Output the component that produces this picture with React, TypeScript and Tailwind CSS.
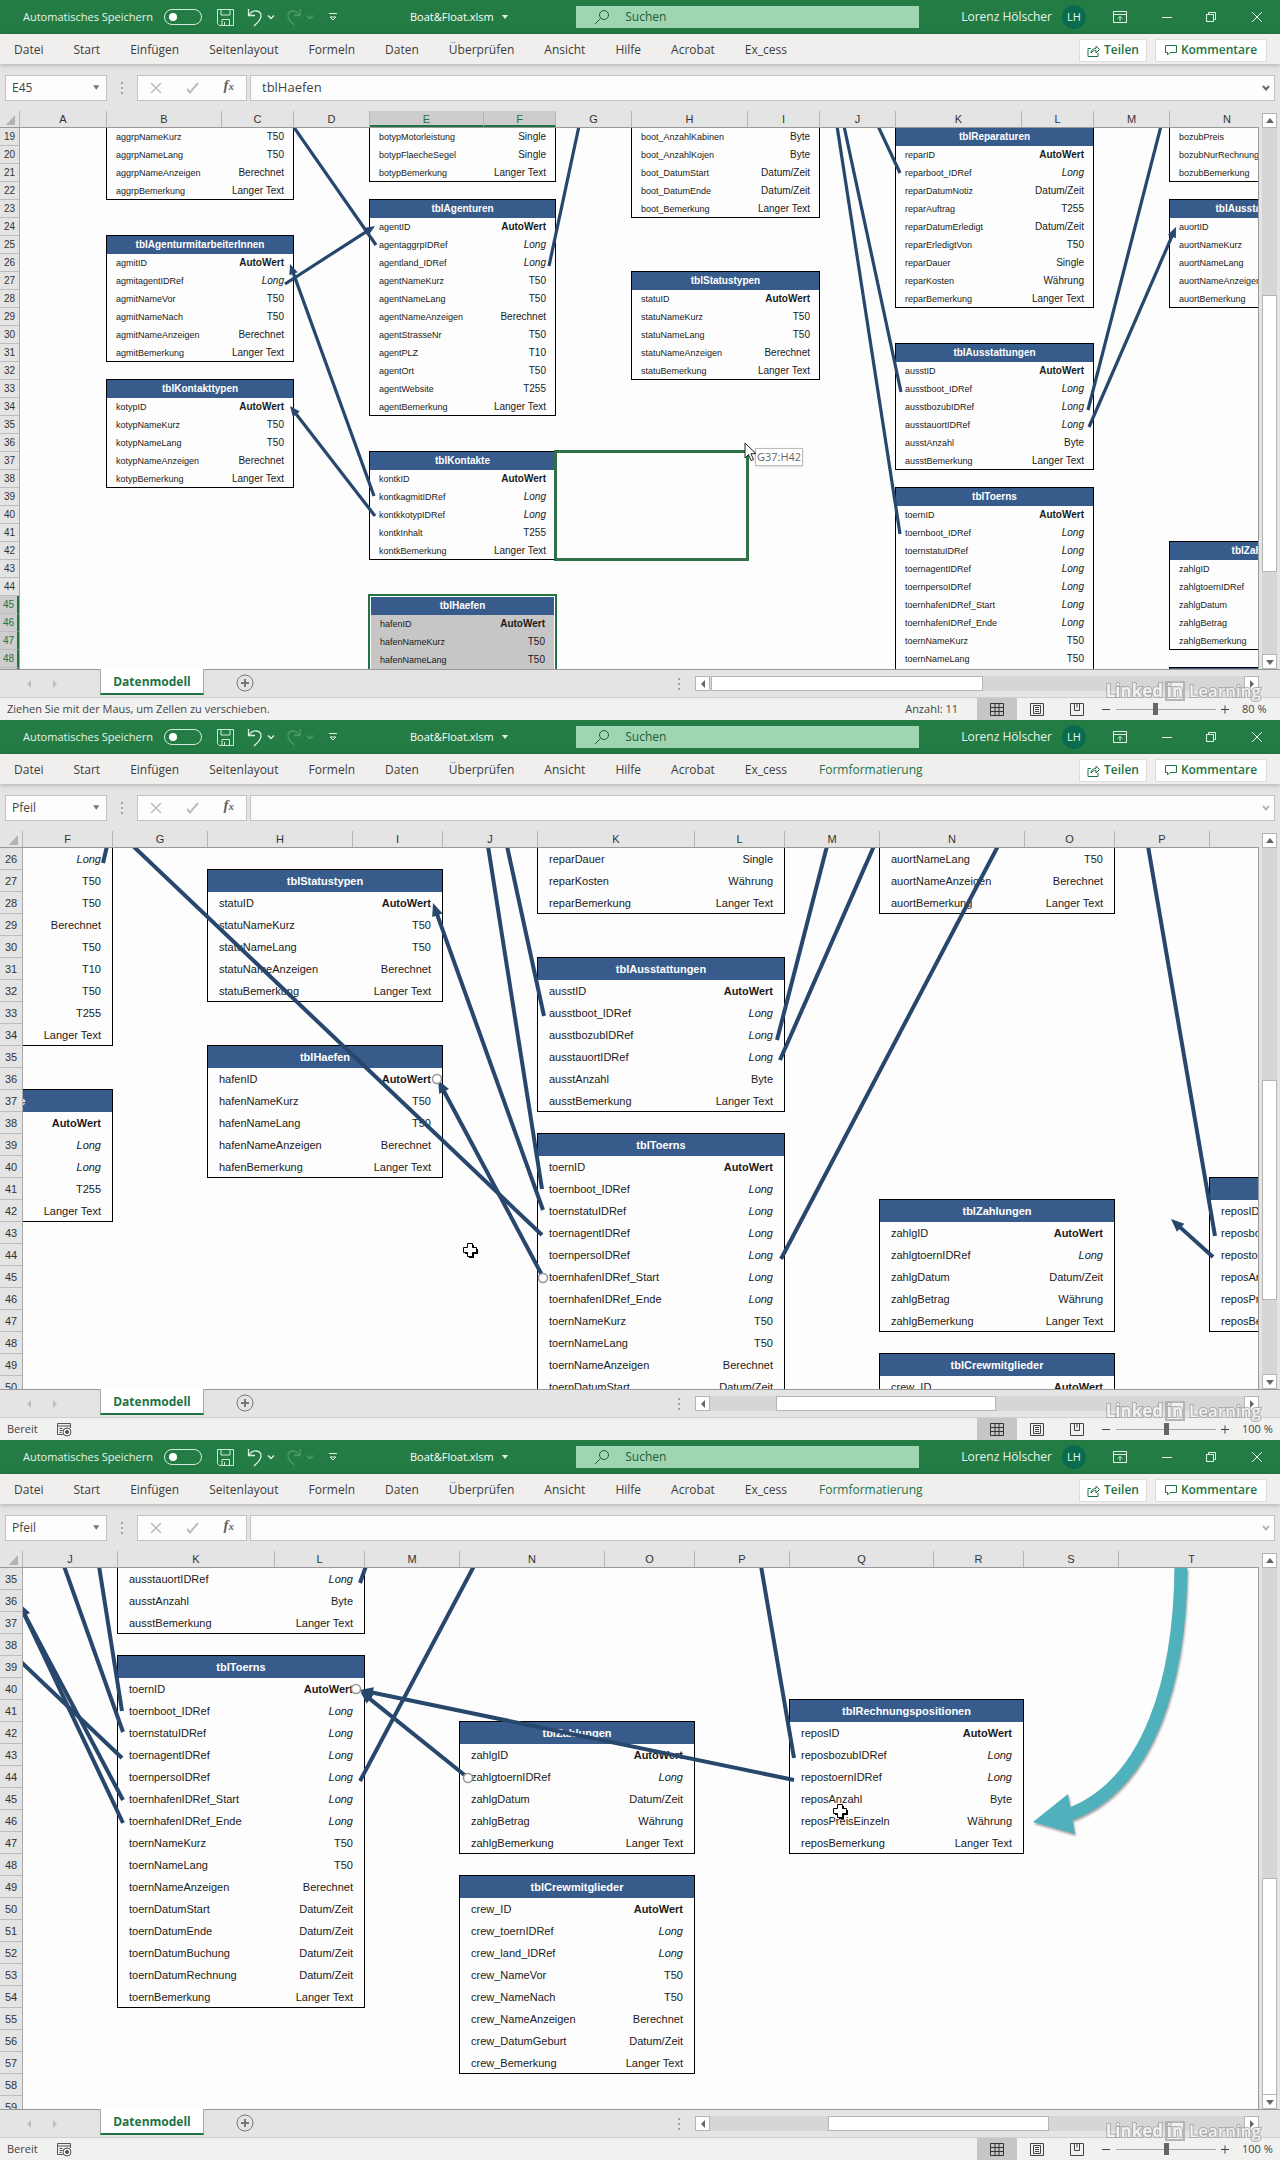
import type { ReactNode } from "react";
import clsx from "clsx";

type Field = [name: string, type: string];
type Point = [x: number, y: number];

interface Entity {
	col: string;
	fields: Field[];
	row: number;
	selected?: boolean;
	title?: string;
}

interface Connector {
	arrow?: boolean;
	from: Point;
	to: Point;
}

interface Column {
	letter: string;
	width: number;
}

interface Workbook {
	columns: Column[];
	connectors: Connector[];
	contextTab?: string;
	entities: Entity[];
	firstRow: number;
	formula: string;
	handles: Point[];
	hiddenWidth: number;
	hScroll: { start: string; thumb: string };
	id: string;
	nameBox: string;
	overlay?: ReactNode;
	rowCount: number;
	rowHeight: number;
	selectedCols?: string;
	selectedFromRow?: number;
	status: string;
	total?: string;
	vScroll: { start: string; thumb: string };
	zoom: number;
	zoomPosition: number;
}

const AUTO = "AutoWert";
const LONG = "Long";
const DATE = "Datum/Zeit";
const TEXT = "Langer Text";
const CALC = "Berechnet";

const ribbonTabs = [
	"Datei",
	"Start",
	"Einfügen",
	"Seitenlayout",
	"Formeln",
	"Daten",
	"Überprüfen",
	"Ansicht",
	"Hilfe",
	"Acrobat",
	"Ex_cess",
];

const haefenFields: Field[] = [
	["hafenID", AUTO],
	["hafenNameKurz", "T50"],
	["hafenNameLang", "T50"],
	["hafenNameAnzeigen", CALC],
	["hafenBemerkung", TEXT],
];

const model: Entity[] = [
	{
		col: "B",
		row: 19,
		fields: [
			["aggrpNameKurz", "T50"],
			["aggrpNameLang", "T50"],
			["aggrpNameAnzeigen", CALC],
			["aggrpBemerkung", TEXT],
		],
	},
	{
		title: "tblAgenturmitarbeiterInnen",
		col: "B",
		row: 25,
		fields: [
			["agmitID", AUTO],
			["agmitagentIDRef", LONG],
			["agmitNameVor", "T50"],
			["agmitNameNach", "T50"],
			["agmitNameAnzeigen", CALC],
			["agmitBemerkung", TEXT],
		],
	},
	{
		title: "tblKontakttypen",
		col: "B",
		row: 33,
		fields: [
			["kotypID", AUTO],
			["kotypNameKurz", "T50"],
			["kotypNameLang", "T50"],
			["kotypNameAnzeigen", CALC],
			["kotypBemerkung", TEXT],
		],
	},
	{
		col: "E",
		row: 19,
		fields: [
			["botypMotorleistung", "Single"],
			["botypFlaecheSegel", "Single"],
			["botypBemerkung", TEXT],
		],
	},
	{
		title: "tblAgenturen",
		col: "E",
		row: 23,
		fields: [
			["agentID", AUTO],
			["agentaggrpIDRef", LONG],
			["agentland_IDRef", LONG],
			["agentNameKurz", "T50"],
			["agentNameLang", "T50"],
			["agentNameAnzeigen", CALC],
			["agentStrasseNr", "T50"],
			["agentPLZ", "T10"],
			["agentOrt", "T50"],
			["agentWebsite", "T255"],
			["agentBemerkung", TEXT],
		],
	},
	{
		title: "tblKontakte",
		col: "E",
		row: 37,
		fields: [
			["kontkID", AUTO],
			["kontkagmitIDRef", LONG],
			["kontkkotypIDRef", LONG],
			["kontkInhalt", "T255"],
			["kontkBemerkung", TEXT],
		],
	},
	{
		col: "H",
		row: 19,
		fields: [
			["boot_AnzahlKabinen", "Byte"],
			["boot_AnzahlKojen", "Byte"],
			["boot_DatumStart", DATE],
			["boot_DatumEnde", DATE],
			["boot_Bemerkung", TEXT],
		],
	},
	{
		title: "tblStatustypen",
		col: "H",
		row: 27,
		fields: [
			["statuID", AUTO],
			["statuNameKurz", "T50"],
			["statuNameLang", "T50"],
			["statuNameAnzeigen", CALC],
			["statuBemerkung", TEXT],
		],
	},
	{
		title: "tblReparaturen",
		col: "K",
		row: 19,
		fields: [
			["reparID", AUTO],
			["reparboot_IDRef", LONG],
			["reparDatumNotiz", DATE],
			["reparAuftrag", "T255"],
			["reparDatumErledigt", DATE],
			["reparErledigtVon", "T50"],
			["reparDauer", "Single"],
			["reparKosten", "Währung"],
			["reparBemerkung", TEXT],
		],
	},
	{
		title: "tblAusstattungen",
		col: "K",
		row: 31,
		fields: [
			["ausstID", AUTO],
			["ausstboot_IDRef", LONG],
			["ausstbozubIDRef", LONG],
			["ausstauortIDRef", LONG],
			["ausstAnzahl", "Byte"],
			["ausstBemerkung", TEXT],
		],
	},
	{
		title: "tblToerns",
		col: "K",
		row: 39,
		fields: [
			["toernID", AUTO],
			["toernboot_IDRef", LONG],
			["toernstatuIDRef", LONG],
			["toernagentIDRef", LONG],
			["toernpersoIDRef", LONG],
			["toernhafenIDRef_Start", LONG],
			["toernhafenIDRef_Ende", LONG],
			["toernNameKurz", "T50"],
			["toernNameLang", "T50"],
			["toernNameAnzeigen", CALC],
			["toernDatumStart", DATE],
			["toernDatumEnde", DATE],
			["toernDatumBuchung", DATE],
			["toernDatumRechnung", DATE],
			["toernBemerkung", TEXT],
		],
	},
	{
		col: "N",
		row: 19,
		fields: [
			["bozubPreis", ""],
			["bozubNurRechnung", ""],
			["bozubBemerkung", ""],
		],
	},
	{
		title: "tblAusstattungsorte",
		col: "N",
		row: 23,
		fields: [
			["auortID", AUTO],
			["auortNameKurz", "T50"],
			["auortNameLang", "T50"],
			["auortNameAnzeigen", CALC],
			["auortBemerkung", TEXT],
		],
	},
	{
		title: "tblZahlungen",
		col: "N",
		row: 42,
		fields: [
			["zahlgID", AUTO],
			["zahlgtoernIDRef", LONG],
			["zahlgDatum", DATE],
			["zahlgBetrag", "Währung"],
			["zahlgBemerkung", TEXT],
		],
	},
	{
		title: "tblCrewmitglieder",
		col: "N",
		row: 49,
		fields: [
			["crew_ID", AUTO],
			["crew_toernIDRef", LONG],
			["crew_land_IDRef", LONG],
			["crew_NameVor", "T50"],
			["crew_NameNach", "T50"],
			["crew_NameAnzeigen", CALC],
			["crew_DatumGeburt", DATE],
			["crew_Bemerkung", TEXT],
		],
	},
	{
		title: "tblRechnungspositionen",
		col: "Q",
		row: 41,
		fields: [
			["reposID", AUTO],
			["reposbozubIDRef", LONG],
			["repostoernIDRef", LONG],
			["reposAnzahl", "Byte"],
			["reposPreisEinzeln", "Währung"],
			["reposBemerkung", TEXT],
		],
	},
];

function columnsFrom(first: string, widths: number[]): Column[] {
	return widths.map((width, i) => ({
		letter: String.fromCharCode(first.charCodeAt(0) + i),
		width,
	}));
}

function ArrowCursor() {
	return (
		<svg
			className="absolute left-[724px] top-[314px]"
			width="14"
			height="20"
			viewBox="0 0 14 20"
		>
			<path
				d="M1 1v15l3.5-3.4 2.6 5.9 2.4-1-2.6-5.8H12z"
				fill="#fff"
				stroke="#222"
			/>
		</svg>
	);
}

function CrossCursor({ className }: { className: string }) {
	return (
		<svg
			className={clsx("absolute", className)}
			width="17"
			height="17"
			viewBox="0 0 17 17"
		>
			<path d="M7 3h5v4h4v5h-4v4H7v-4H3V7h4z" fill="#000" />
			<path
				d="M5.5 1.5h5v4h4v5h-4v4h-5v-4h-4v-5h4z"
				fill="#fff"
				stroke="#000"
			/>
		</svg>
	);
}

const workbooks: Workbook[] = [
	{
		id: "move",
		nameBox: "E45",
		formula: "tblHaefen",
		zoom: 80,
		zoomPosition: 39,
		firstRow: 19,
		rowCount: 31,
		rowHeight: 18,
		hiddenWidth: 0,
		columns: columnsFrom(
			"A",
			[87, 115, 72, 76, 114, 72, 76, 116, 72, 76, 126, 72, 76, 115, 72],
		),
		selectedCols: "EF",
		selectedFromRow: 45,
		status: "Ziehen Sie mit der Maus, um Zellen zu verschieben.",
		total: "Anzahl: 11",
		vScroll: { start: "h-[167px]", thumb: "h-[277px]" },
		hScroll: { start: "w-px", thumb: "w-[272px]" },
		entities: [
			...model,
			{
				title: "tblHaefen",
				col: "E",
				row: 45,
				fields: haefenFields,
				selected: true,
			},
		],
		handles: [],
		connectors: [
			{ from: [293, 126], to: [376, 245] },
			{ from: [285, 284], to: [375, 226], arrow: true },
			{ from: [579, 126], to: [549, 266] },
			{ from: [374, 496], to: [290, 264], arrow: true },
			{ from: [375, 516], to: [290, 406], arrow: true },
			{ from: [837, 126], to: [900, 534] },
			{ from: [844, 126], to: [901, 392] },
			{ from: [878, 126], to: [900, 173] },
			{ from: [1161, 126], to: [1088, 410] },
			{ from: [1089, 427], to: [1176, 227], arrow: true },
		],
		overlay: (
			<>
				<span className="absolute left-[735px] top-[320px] border border-[#bdbdbd] bg-white px-px font-['Open_Sans',sans-serif] text-[11px] leading-4 text-[#666] shadow">
					G37:H42
				</span>
				<ArrowCursor />
			</>
		),
	},
	{
		id: "harbours",
		nameBox: "Pfeil",
		formula: "",
		contextTab: "Formformatierung",
		zoom: 100,
		zoomPosition: 50,
		firstRow: 26,
		rowCount: 25,
		rowHeight: 22,
		hiddenWidth: 145,
		columns: columnsFrom(
			"E",
			[145, 90, 95, 145, 90, 95, 157, 90, 95, 145, 90, 95, 144, 90],
		),
		status: "Bereit",
		vScroll: { start: "h-[232px]", thumb: "h-[220px]" },
		hScroll: { start: "w-[66px]", thumb: "w-[220px]" },
		entities: [
			...model,
			{ title: "tblHaefen", col: "H", row: 35, fields: haefenFields },
		],
		handles: [
			[437, 359],
			[543, 558],
		],
		connectors: [
			{ from: [133, 126], to: [542, 515] },
			{ from: [107, 126], to: [103, 143] },
			{ from: [543, 490], to: [433, 183], arrow: true },
			{ from: [488, 126], to: [542, 469] },
			{ from: [507, 126], to: [544, 296] },
			{ from: [543, 557], to: [438, 360], arrow: true },
			{ from: [827, 126], to: [777, 320] },
			{ from: [874, 126], to: [780, 340] },
			{ from: [998, 126], to: [781, 539] },
			{ from: [1148, 126], to: [1215, 516] },
			{ from: [1213, 537], to: [1171, 499], arrow: true },
		],
		overlay: <CrossCursor className="left-[439px] top-[394px]" />,
	},
	{
		id: "payments",
		nameBox: "Pfeil",
		formula: "",
		contextTab: "Formformatierung",
		zoom: 100,
		zoomPosition: 50,
		firstRow: 35,
		rowCount: 25,
		rowHeight: 22,
		hiddenWidth: 0,
		columns: columnsFrom(
			"J",
			[95, 157, 90, 95, 145, 90, 95, 144, 90, 95, 146],
		),
		status: "Bereit",
		vScroll: { start: "h-[310px]", thumb: "h-[218px]" },
		hScroll: { start: "w-[118px]", thumb: "w-[221px]" },
		entities: model,
		handles: [
			[356, 249],
			[468, 338],
		],
		connectors: [
			{ from: [64, 126], to: [123, 292] },
			{ from: [99, 126], to: [122, 271] },
			{ from: [366, 126], to: [360, 143] },
			{ from: [474, 126], to: [360, 341] },
			{ from: [18, 219], to: [122, 318] },
			{ from: [123, 360], to: [19, 164], arrow: true },
			{ from: [123, 383], to: [19, 163], arrow: true },
			{ from: [467, 337], to: [360, 251], arrow: true },
			{ from: [794, 340], to: [360, 250], arrow: true },
			{ from: [761, 126], to: [794, 318] },
		],
		overlay: (
			<>
				<svg className="pointer-events-none absolute inset-0 size-full drop-shadow-[1px_2px_1px_rgba(0,0,0,0.35)]">
					<g transform="translate(-23 -128)">
						<path
							d="M1181 116C1182 238 1150 345 1068 375"
							fill="none"
							stroke="#4fb1bc"
							strokeWidth="13"
						/>
						<path d="M1033 382l35-28 7 40z" fill="#4fb1bc" />
					</g>
				</svg>
				<CrossCursor className="left-[809px] top-[235px]" />
			</>
		),
	},
];

function ConnectorShape({
	connector,
	scale,
}: {
	connector: Connector;
	scale: number;
}) {
	const [x1, y1] = connector.from;
	const [x2, y2] = connector.to;
	const angle = Math.atan2(y2 - y1, x2 - x1);
	const length = 13 * scale;
	const half = 5.5 * scale;
	const inset = connector.arrow ? length - 2 : 0;
	const deg = (angle * 180) / Math.PI;

	return (
		<g>
			<line
				x1={x1}
				y1={y1}
				x2={x2 - Math.cos(angle) * inset}
				y2={y2 - Math.sin(angle) * inset}
				strokeWidth={4 * scale}
			/>
			{connector.arrow && (
				<polygon
					points={`0,0 ${-length},${-half} ${-length},${half}`}
					transform={`translate(${x2} ${y2}) rotate(${deg})`}
					stroke="none"
				/>
			)}
		</g>
	);
}

function EntityTable({ book, entity }: { book: Workbook; entity: Entity }) {
	const compact = book.zoom < 100;
	const colIndex = book.columns.findIndex((c) => c.letter === entity.col);
	const lineCount = entity.fields.length + (entity.title ? 1 : 0);
	const endRow = Math.min(entity.row + lineCount, book.firstRow + book.rowCount);
	const startRow = Math.max(entity.row, book.firstRow);

	if (colIndex < 0 || startRow >= endRow) {
		return null;
	}

	const showTitle = Boolean(entity.title) && startRow === entity.row;
	const firstFieldRow = entity.row + (entity.title ? 1 : 0);
	const fields = entity.fields.slice(
		Math.max(0, startRow - firstFieldRow),
		endRow - firstFieldRow,
	);
	const start = startRow - book.firstRow + 1;
	const cell = compact ? "h-[18px]" : "h-[22px]";

	return (
		<div
			className={clsx(
				"-ml-px overflow-hidden",
				start === 1 ? "border-t-0" : "-mt-px",
				entity.selected
					? "border-2 border-b-0 border-white bg-[#c6c6c6] outline-2 -outline-offset-1 outline-[#217346]"
					: "border border-black",
				start === 1 && "border-t-0",
			)}
			style={{
				gridColumn: `${colIndex + 1} / span 2`,
				gridRow: `${start} / span ${endRow - startRow}`,
			}}
		>
			<table className="w-full border-collapse leading-none">
				{showTitle && (
					<thead>
						<tr>
							<th
								colSpan={2}
								className={clsx(
									"bg-[#375b8b] p-0 text-center font-bold text-white",
									cell,
									compact ? "text-[10px]" : "text-[11px]",
								)}
							>
								{entity.title}
							</th>
						</tr>
					</thead>
				)}
				<tbody>
					{fields.map(([name, type]) => (
						<tr key={name}>
							<td
								className={clsx(
									"whitespace-nowrap py-0 pr-0",
									cell,
									compact ? "pl-[9px] text-[9px]" : "pl-[11px] text-[11px]",
								)}
							>
								{name}
							</td>
							<td
								className={clsx(
									"whitespace-nowrap py-0 pl-0 text-right",
									cell,
									compact ? "pr-[9px] text-[10px]" : "pr-[11px] text-[11px]",
									type === AUTO && "font-bold",
									type === LONG && "italic",
								)}
							>
								{type}
							</td>
						</tr>
					))}
				</tbody>
			</table>
		</div>
	);
}

function TitleBar({ id }: { id: string }) {
	return (
		<header className="flex h-[34px] shrink-0 items-center bg-[#247c45] pl-[23px] text-[11px] text-[#e6f3ea]">
			<label className="flex w-[194px] items-center justify-between">
				<span className="w-[135px] whitespace-nowrap">
					Automatisches Speichern
				</span>
				<input type="checkbox" className="peer sr-only" />
				<span className="mr-[15px] flex h-4 w-[38px] items-center rounded-full border border-[#d5ecdc] px-1">
					<span className="size-2 rounded-full bg-white" />
				</span>
			</label>
			<button type="button" aria-label="Speichern">
				<svg width="17" height="17" viewBox="0 0 17 17" fill="none" stroke="#cfead7">
					<path d="M.5.5h16v16h-14l-2-2zM4 .5v5.5h9V.5M5 16.500v-6h7.500v6M7.500 16v-3" />
				</svg>
			</button>
			<button type="button" aria-label="Rückgängig" className="ml-3">
				<svg width="32" height="20" viewBox="0 0 32 20" fill="none" stroke="#d9efdf">
					<path
						d="M2.500 2v6.500H9M3 8C7 2 15 3 15 9c0 4-3 6-7 10"
						strokeWidth="1.300"
					/>
					<path d="M22 8.500l3 3 3-3" strokeWidth="1.500" />
				</svg>
			</button>
			<button type="button" aria-label="Wiederholen" className="ml-2">
				<svg width="30" height="20" viewBox="0 0 30 20" fill="none" stroke="#4c9a68">
					<path d="M14 2v6.500H8M13 8C9 2 2 3 2 9c0 4 3 6 6 9" strokeWidth="1.300" />
					<path d="M21 8.500l3 3 3-3" strokeWidth="1.500" />
				</svg>
			</button>
			<button type="button" aria-label="Symbolleiste anpassen" className="ml-3">
				<svg width="10" height="10" viewBox="0 0 10 10" fill="none" stroke="#e6f3ea">
					<path d="M1 1.500h8M2 5l3 3 3-3z" />
				</svg>
			</button>
			<span className="ml-[72px] whitespace-nowrap text-[11px] text-white">
				Boat&amp;Float.xlsm
			</span>
			<svg className="ml-2" width="6" height="4" viewBox="0 0 6 4" fill="#e6f3ea">
				<path d="M0 0h6L3 4z" />
			</svg>
			<label
				htmlFor={`${id}-search`}
				className="ml-auto flex h-[22px] w-[343px] items-center bg-[#a0d5b2] pl-[18px] text-[#1e5e37]"
			>
				<svg width="16" height="16" viewBox="0 0 16 16" fill="none" stroke="#1e5e37">
					<circle cx="10" cy="6" r="4.500" />
					<path d="M6.500 9.500L1 15" />
				</svg>
				<input
					id={`${id}-search`}
					type="search"
					placeholder="Suchen"
					className="ml-[15px] w-60 bg-transparent text-[12px] outline-none placeholder:text-[#1e5e37]"
				/>
			</label>
			<span className="ml-[42px] whitespace-nowrap text-[12px]">
				Lorenz Hölscher
			</span>
			<span className="ml-2.5 flex size-6 items-center justify-center rounded-full bg-[#0b6b4f]">
				LH
			</span>
			<div className="flex items-center gap-8 pl-[27px] pr-[17px]">
				<button
					type="button"
					aria-label="Menüband-Anzeigeoptionen"
					className="mr-0.5"
				>
					<svg width="14" height="14" viewBox="0 0 14 14" fill="none" stroke="#e6f3ea">
						<path d="M.5 1.500h13v11H.5zM.5 4.500h13M7 11V6.500M5 8.500l2-2 2 2" />
					</svg>
				</button>
				<button type="button" aria-label="Minimieren">
					<svg width="12" height="12" viewBox="0 0 12 12" stroke="#e6f3ea">
						<path d="M1 6.500h10" />
					</svg>
				</button>
				<button type="button" aria-label="Verkleinern" className="mr-0.5">
					<svg width="12" height="12" viewBox="0 0 12 12" fill="none" stroke="#e6f3ea">
						<path d="M1.500 3.500h7v7h-7zM3.500 3V1.500h7v7H9" />
					</svg>
				</button>
				<button type="button" aria-label="Schließen">
					<svg width="12" height="12" viewBox="0 0 12 12" stroke="#e6f3ea">
						<path d="M1 1l10 10M11 1L1 11" />
					</svg>
				</button>
			</div>
		</header>
	);
}

function Ribbon({ contextTab }: { contextTab?: string }) {
	return (
		<nav className="z-10 flex h-[30px] shrink-0 items-center bg-[#f0efee] pl-[14px] pr-[13px] pt-0.5 text-[12px] text-[#3c3c3c] shadow-[0_1px_5px_rgba(0,0,0,0.25)]">
			<div className="flex gap-[30px]">
				{ribbonTabs.map((tab) => (
					<button key={tab} type="button" className="whitespace-nowrap">
						{tab}
					</button>
				))}
				{contextTab && (
					<button type="button" className="ml-0.5 text-[#217346]">
						{contextTab}
					</button>
				)}
			</div>
			<div className="ml-auto flex gap-2 font-semibold text-[#217346]">
				<button
					type="button"
					className="flex h-[23px] w-[68px] items-center justify-center gap-1 border border-[#dedddc] bg-white"
				>
					<svg width="13" height="13" viewBox="0 0 13 13" fill="none" stroke="#217346">
						<path d="M4 4.500H1v8h10V9M4 9c0-3 2-4.500 5-4.500V2l3.500 3.500L9 9V6.500C7 6.500 5 7 4 9z" />
					</svg>
					Teilen
				</button>
				<button
					type="button"
					className="flex h-[23px] w-[112px] items-center justify-center gap-1 border border-[#dedddc] bg-white"
				>
					<svg width="12" height="12" viewBox="0 0 12 12" fill="none" stroke="#217346">
						<path d="M.5 1.500h11v7H5L2.500 11V8.500h-2z" />
					</svg>
					Kommentare
				</button>
			</div>
		</nav>
	);
}

function Dots({ className }: { className?: string }) {
	return (
		<svg
			className={className}
			width="2"
			height="12"
			viewBox="0 0 2 12"
			fill="#a3a3a3"
		>
			<path d="M0 0h2v2H0zM0 5h2v2H0zM0 10h2v2H0z" />
		</svg>
	);
}

function FormulaBar({ book }: { book: Workbook }) {
	return (
		<div className="flex h-[47px] shrink-0 items-center pl-[5px] pr-[5px] text-[12px] text-[#444]">
			<div className="flex h-[26px] w-[102px] items-center border border-[#c3c3c3] bg-[#fdfdfd] pl-1.5 pr-[7px]">
				<input
					aria-label="Namenfeld"
					defaultValue={book.nameBox}
					className="w-full min-w-0 bg-transparent outline-none"
				/>
				<svg width="7" height="5" viewBox="0 0 7 5" fill="#777">
					<path d="M0 0h7L3.500 5z" />
				</svg>
			</div>
			<Dots className="mx-[14px]" />
			<div className="flex h-[26px] w-[110px] items-center justify-around border border-[#c3c3c3] bg-[#fdfdfd]">
				<button type="button" aria-label="Abbrechen">
					<svg width="12" height="12" viewBox="0 0 12 12" stroke="#bdbdbd" strokeWidth="1.500">
						<path d="M1 1l10 10M11 1L1 11" />
					</svg>
				</button>
				<button type="button" aria-label="Eingeben">
					<svg width="13" height="12" viewBox="0 0 13 12" fill="none" stroke="#bdbdbd" strokeWidth="2">
						<path d="M1 7l3 3.500L12 1" />
					</svg>
				</button>
				<button
					type="button"
					aria-label="Funktion einfügen"
					className="pb-1 font-['Liberation_Serif',serif] text-[15px] font-bold italic leading-none text-[#666]"
				>
					f<span className="text-[11px]">x</span>
				</button>
			</div>
			<div className="ml-[3px] flex h-[26px] min-w-0 flex-1 items-center border border-[#c3c3c3] bg-[#fdfdfd] pl-[11px] pr-1">
				<input
					aria-label="Bearbeitungsleiste"
					defaultValue={book.formula}
					className="min-w-0 flex-1 bg-transparent text-[13px] outline-none"
				/>
				<svg
					width="8"
					height="6"
					viewBox="0 0 8 6"
					fill="none"
					stroke={book.formula ? "#666" : "#b5b5b5"}
					strokeWidth="2"
				>
					<path d="M1 1l3 3.500L7 1" />
				</svg>
			</div>
		</div>
	);
}

function Sheet({ book }: { book: Workbook }) {
	const compact = book.zoom < 100;
	const scale = compact ? 0.8 : 1;
	const rows = Array.from(
		{ length: book.rowCount },
		(_, i) => book.firstRow + i,
	);
	const gutter = compact ? 20 : 23;

	return (
		<div className="flex min-h-0 flex-1 font-['Liberation_Sans',Arial,sans-serif]">
			<div className="flex min-w-0 flex-1 flex-col">
				<div className="flex h-[17px] shrink-0 overflow-hidden border-b border-[#999] text-[11px] leading-4 text-[#333]">
					<div
						className={clsx(
							"flex shrink-0 items-end justify-end border-r border-[#b5b5b5] pb-0.5 pr-1",
							compact ? "w-5" : "w-[23px]",
						)}
					>
						<svg width="9" height="10" viewBox="0 0 9 10" fill="#b3b3b3">
							<path d="M9 0v10H0z" />
						</svg>
					</div>
					{book.columns
						.filter((_, i) => !(book.hiddenWidth && i === 0))
						.map(({ letter, width }) => (
							<div
								key={letter}
								className={clsx(
									"shrink-0 border-r border-[#b5b5b5] text-center",
									book.selectedCols?.includes(letter) &&
										"border-b-2 border-b-[#217346] bg-[#cdcdcd] text-[#217346]",
								)}
								style={{ width }}
							>
								{letter}
							</div>
						))}
				</div>
				<div className="flex min-h-0 flex-1">
					<div
						className={clsx(
							"shrink-0 overflow-hidden border-r border-[#a8a8a8] text-center text-[#333]",
							compact ? "w-5 text-[10px]" : "w-[23px] text-[11px]",
						)}
					>
						{rows.map((row) => (
							<div
								key={row}
								className={clsx(
									"border-b border-[#bdbdbd]",
									compact ? "h-[18px] leading-[18px]" : "h-[22px] leading-[22px]",
									book.selectedFromRow &&
										row >= book.selectedFromRow &&
										"border-r-2 border-r-[#217346] bg-[#cdcdcd] text-[#217346]",
								)}
							>
								{row}
							</div>
						))}
					</div>
					<div className="relative min-w-0 flex-1 overflow-hidden border-r border-[#999] bg-[#fdfdfd] text-[#1a1a1a]">
						<div
							className="grid"
							style={{
								gridTemplateColumns: book.columns
									.map((c) => `${c.width}px`)
									.join(" "),
								gridAutoRows: book.rowHeight,
								marginLeft: -book.hiddenWidth,
							}}
						>
							{book.entities.map((entity) => (
								<EntityTable
									key={`${entity.col}${entity.row}`}
									book={book}
									entity={entity}
								/>
							))}
							{book.selectedFromRow && (
								<div className="-ml-0.5 -mr-px -mt-0.5 -mb-px col-[7/span_2] row-[19/span_6] border-3 border-[#2f7048]" />
							)}
						</div>
						<svg className="pointer-events-none absolute inset-0 size-full">
							<g
								transform={`translate(${-gutter} -128)`}
								stroke="#27476d"
								fill="#27476d"
							>
								{book.connectors.map((connector) => (
									<ConnectorShape
										key={`${connector.from}-${connector.to}`}
										connector={connector}
										scale={scale}
									/>
								))}
								{book.handles.map(([x, y]) => (
									<circle
										key={`${x}-${y}`}
										cx={x}
										cy={y}
										r="4.500"
										fill="#fff"
										stroke="#969696"
										strokeWidth="1.500"
									/>
								))}
							</g>
						</svg>
						{book.overlay}
					</div>
				</div>
			</div>
			<div className="flex w-[21px] shrink-0 flex-col px-[3px] pt-0.5">
				<ScrollButton label="Nach oben" path="M5 2l4 5H1z" />
				<div className="flex min-h-0 flex-1 flex-col bg-[#d6d6d6]">
					<div className={clsx("shrink-0", book.vScroll.start)} />
					<div
						className={clsx(
							"shrink-0 border border-[#b5b5b5] bg-white",
							book.vScroll.thumb,
						)}
					/>
				</div>
				<ScrollButton label="Nach unten" path="M5 8l4-5H1z" />
			</div>
		</div>
	);
}

function ScrollButton({ label, path }: { label: string; path: string }) {
	return (
		<button
			type="button"
			aria-label={label}
			className="flex size-[15px] shrink-0 items-center justify-center border border-[#b5b5b5] bg-white"
		>
			<svg width="10" height="10" viewBox="0 0 10 10" fill="#666">
				<path d={path} />
			</svg>
		</button>
	);
}

function SheetTabs({ book }: { book: Workbook }) {
	return (
		<div className="flex h-7 shrink-0 items-start border-t border-[#999]">
			<div className="flex w-[100px] items-center gap-[22px] self-center pl-[26px]">
				<button type="button" aria-label="Vorheriges Blatt">
					<svg width="5" height="8" viewBox="0 0 5 8" fill="#bdbdbd">
						<path d="M5 0v8L1 4z" />
					</svg>
				</button>
				<button type="button" aria-label="Nächstes Blatt">
					<svg width="5" height="8" viewBox="0 0 5 8" fill="#bdbdbd">
						<path d="M0 0v8l4-4z" />
					</svg>
				</button>
			</div>
			<button
				type="button"
				className="-mt-px h-[26px] w-[104px] border-x border-b-2 border-x-[#a8a8a8] border-b-[#217346] bg-white pt-px text-[12px] font-bold text-[#217346]"
			>
				Datenmodell
			</button>
			<button type="button" aria-label="Neues Blatt" className="ml-8 mt-1">
				<svg width="18" height="18" viewBox="0 0 18 18" fill="none" stroke="#777">
					<circle cx="9" cy="9" r="8" />
					<path d="M9 5v8M5 9h8" strokeWidth="2" />
				</svg>
			</button>
			<Dots className="ml-auto mr-[15px] mt-2" />
			<div className="mr-[21px] mt-1.5 flex w-[564px] bg-[#d6d6d6]">
				<ScrollButton label="Nach links" path="M3 5l4-4v8z" />
				<div className="flex min-w-0 flex-1">
					<div className={clsx("shrink-0", book.hScroll.start)} />
					<div
						className={clsx(
							"shrink-0 border border-[#b5b5b5] bg-white",
							book.hScroll.thumb,
						)}
					/>
				</div>
				<ScrollButton label="Nach rechts" path="M7 5L3 1v8z" />
			</div>
		</div>
	);
}

function StatusBar({ book }: { book: Workbook }) {
	return (
		<footer className="flex h-[23px] shrink-0 items-center border-t border-[#d0d0d0] bg-[#f1f1f0] pl-[7px] text-[11px] text-[#444]">
			<span>{book.status}</span>
			{!book.total && (
				<svg
					className="ml-[18px]"
					width="16"
					height="15"
					viewBox="0 0 16 15"
					fill="none"
					stroke="#555"
				>
					<path d="M7 12.500H1.500v-11h13V6M1.500 4h13M3.500 6.500h3M3.500 8.500h3M3.500 10.500h2" />
					<circle cx="11" cy="10" r="4" />
					<circle cx="11" cy="10" r="1.500" fill="#555" />
				</svg>
			)}
			<div className="ml-auto flex h-full items-center">
				{book.total && <span className="mr-[19px]">{book.total}</span>}
				<button
					type="button"
					aria-label="Normal"
					className="flex h-full w-10 items-center justify-center bg-[#c6c6c6]"
				>
					<svg width="14" height="13" viewBox="0 0 14 13" fill="none" stroke="#333">
						<path d="M.5.5h13v12H.5zM5 .5v12M9 .5v12M.5 4.500h13M.5 8.500h13" />
					</svg>
				</button>
				<button
					type="button"
					aria-label="Seitenlayout"
					className="flex h-full w-10 items-center justify-center"
				>
					<svg width="14" height="13" viewBox="0 0 14 13" fill="none" stroke="#444">
						<path d="M.5.5h13v12H.5zM3.500 2.500h7v8h-7zM5 4.500h4M5 6.500h4M5 8.500h4" />
					</svg>
				</button>
				<button
					type="button"
					aria-label="Umbruchvorschau"
					className="flex h-full w-10 items-center justify-center"
				>
					<svg width="14" height="13" viewBox="0 0 14 13" fill="none" stroke="#444">
						<path d="M.5.5h13v12H.5zM4.500.5v7h5v-7M7 .5v4" />
					</svg>
				</button>
				<button type="button" aria-label="Verkleinern" className="ml-1">
					<svg width="10" height="10" viewBox="0 0 10 10" stroke="#444">
						<path d="M1 5.500h8" />
					</svg>
				</button>
				<input
					type="range"
					aria-label="Zoom"
					min={0}
					max={100}
					defaultValue={book.zoomPosition}
					className="ml-[5px] h-3 w-[100px] appearance-none bg-[linear-gradient(#a8a8a8,#a8a8a8)] bg-[length:100%_1px] bg-center bg-no-repeat [&::-webkit-slider-thumb]:h-3 [&::-webkit-slider-thumb]:w-[5px] [&::-webkit-slider-thumb]:appearance-none [&::-webkit-slider-thumb]:bg-[#666]"
				/>
				<button type="button" aria-label="Vergrößern" className="ml-1">
					<svg width="10" height="10" viewBox="0 0 10 10" stroke="#444">
						<path d="M1 5.500h8M5 1.500v8" />
					</svg>
				</button>
				<span className="ml-3 w-[38px] whitespace-nowrap">{book.zoom} %</span>
			</div>
		</footer>
	);
}

function Watermark() {
	return (
		<div className="pointer-events-none absolute bottom-4 right-[19px] flex items-center text-[17px] font-bold leading-[26px] text-[#f4f4f4] opacity-90 [paint-order:stroke_fill] [-webkit-text-stroke:2px_#a6a6a6]">
			Linked
			<span className="ml-0.5 mr-1 flex size-5 items-center justify-center border-2 border-[#b0b0b0] bg-[#f4f4f4]">
				in
			</span>
			<span className="font-semibold">Learning</span>
		</div>
	);
}

export default function App() {
	return (
		<main className="grid h-screen grid-rows-[repeat(3,minmax(0,1fr))] bg-[#e4e4e4] font-['Open_Sans','Noto_Sans',sans-serif]">
			{workbooks.map((book) => (
				<section
					key={book.id}
					className="relative flex min-h-0 min-w-0 flex-col overflow-hidden"
				>
					<TitleBar id={book.id} />
					<Ribbon contextTab={book.contextTab} />
					<FormulaBar book={book} />
					<Sheet book={book} />
					<SheetTabs book={book} />
					<StatusBar book={book} />
					<Watermark />
				</section>
			))}
		</main>
	);
}
